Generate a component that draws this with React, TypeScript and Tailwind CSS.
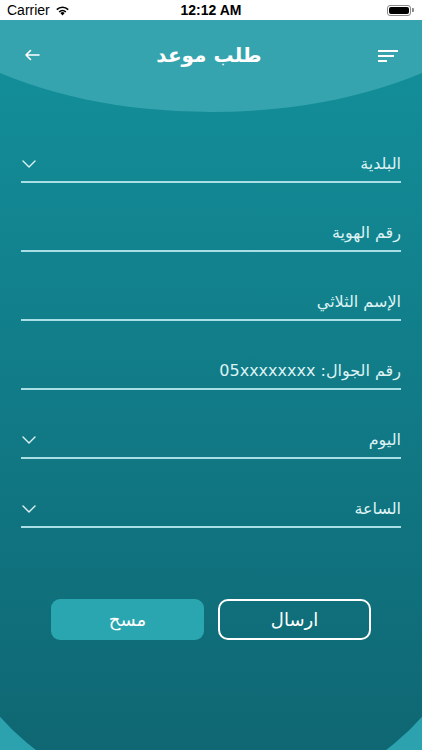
import React from "react";

const fields = [
  { label: "البلدية", select: true },
  { label: "رقم الهوية", select: false },
  { label: "الإسم الثلاثي", select: false },
  { label: "رقم الجوال: 05xxxxxxxx", select: false },
  { label: "اليوم", select: true },
  { label: "الساعة", select: true },
];

function Chevron() {
  return (
    <svg width="14" height="8" viewBox="0 0 14 8" fill="none">
      <polyline
        points="1,1 7,7 13,1"
        stroke="#dff3f5"
        strokeWidth="1.4"
        strokeLinecap="round"
        strokeLinejoin="round"
      />
    </svg>
  );
}

function StatusBar() {
  return (
    <div className="relative z-10 h-[20px] bg-white flex items-center justify-between px-[7px] text-black font-['Liberation_Sans',sans-serif]">
      <div className="flex items-center gap-[5px] w-[120px]">
        <span className="text-[14px] leading-none">Carrier</span>
        <svg width="15" height="11" viewBox="0 0 15 11">
          <path d="M7.5 10.5 L5.3 8.1 A3.2 3.2 0 0 1 9.7 8.1 Z" fill="#000" />
          <path d="M3.6 6.4 A5.6 5.6 0 0 1 11.4 6.4 L10.3 7.5 A4 4 0 0 0 4.7 7.5 Z" fill="#000" />
          <path d="M1.2 4 A9 9 0 0 1 13.8 4 L12.6 5.2 A7.3 7.3 0 0 0 2.4 5.2 Z" fill="#000" />
        </svg>
      </div>
      <span className="text-[14px] font-semibold leading-none">12:12 AM</span>
      <div className="flex items-center justify-end w-[120px] pr-[1px]">
        <div className="w-[24px] h-[11px] rounded-[3px] border border-[#8a8a8a] p-[1px]">
          <div className="w-full h-full rounded-[2px] bg-black" />
        </div>
        <div className="w-[2px] h-[4px] bg-[#8a8a8a] rounded-r-[1px] ml-[1px]" />
      </div>
    </div>
  );
}

export default function App() {
  return (
    <div className="relative w-[422px] h-[750px] overflow-hidden bg-[#2ba2ae] font-['DejaVu_Sans',sans-serif]">
      {/* body shape with rounded bottom corners */}
      <div className="absolute left-[-49px] top-0 w-[520px] h-[806px] rounded-b-[260px_215px] bg-gradient-to-b from-[#13929d] to-[#0e6470]" />
      {/* header curve */}
      <div className="absolute left-[-119px] top-[-226px] w-[660px] h-[338px] rounded-[50%] bg-[#35a4ae]" />

      <StatusBar />

      <div className="relative">
        <div className="h-[70px] flex items-center justify-between px-[24px]">
          <svg width="16" height="12" viewBox="0 0 16 12" fill="none">
            <path
              d="M15 6 H2 M6.5 1.5 L2 6 L6.5 10.5"
              stroke="white"
              strokeWidth="1.6"
              strokeLinecap="round"
              strokeLinejoin="round"
            />
          </svg>
          <h1 className="text-white text-[20px] font-bold leading-none">طلب موعد</h1>
          <div className="flex flex-col gap-[3px] w-[20px] pt-[1px]">
            <div className="h-[2px] w-[20px] bg-white" />
            <div className="h-[2px] w-[16px] bg-white" />
            <div className="h-[2px] w-[9px] bg-white" />
          </div>
        </div>
        <div className="h-[24px]" />

        <div dir="rtl" className="px-[21px]">
          {fields.map((f) => (
            <div
              key={f.label}
              className="pt-[38px] pb-[5px] border-b-2 border-[#a9dfe4] flex items-center justify-between"
            >
              <span className="text-[#def2f4] text-[16px] leading-[24px]">{f.label}</span>
              {f.select && (
                <span className="pl-[1px]">
                  <Chevron />
                </span>
              )}
            </div>
          ))}
        </div>

        <div dir="rtl" className="flex justify-center gap-[14px] mt-[71px]">
          <button className="w-[153px] h-[41px] rounded-[10px] border-2 border-white text-white text-[18px]">
            ارسال
          </button>
          <button className="w-[153px] h-[41px] rounded-[9px] bg-[#2aa6b1] text-white text-[18px]">
            مسح
          </button>
        </div>
      </div>
    </div>
  );
}
